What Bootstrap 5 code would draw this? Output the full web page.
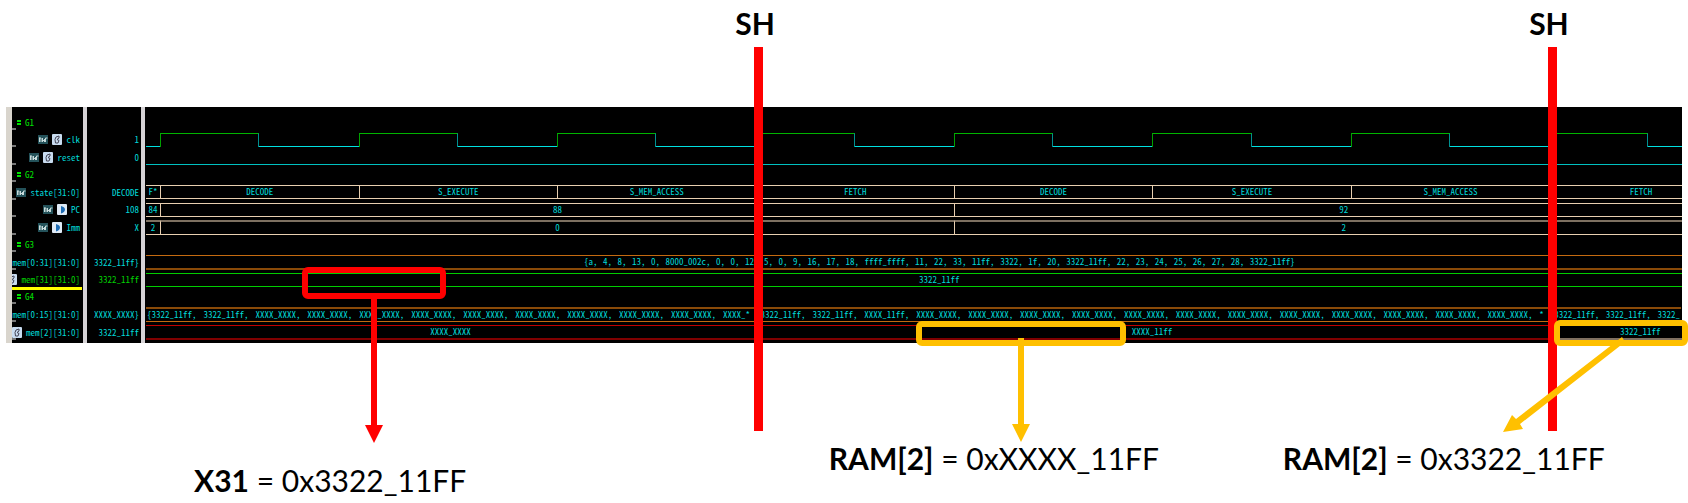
<!DOCTYPE html>
<html lang="en">
<head>
<meta charset="utf-8">
<meta name="viewport" content="width=device-width, initial-scale=1">
<title>SH instruction waveform</title>
<link href="https://cdn.jsdelivr.net/npm/bootstrap@5.3.0/dist/css/bootstrap.min.css" rel="stylesheet">
<style>
  body { background: #fff; color: #000; font-family: Lato, "Liberation Sans", sans-serif; overflow-x: hidden; }
  .figure-area { padding-top: 107px; }
  .viewer { margin: 0 6px; background: #000; color: #00d8d8; font: 9px/13px "Noto Sans Mono CJK JP", "DejaVu Sans Mono", monospace; white-space: nowrap; }
  .rows { display: grid; padding-top: 8px; grid-template-columns: minmax(0, 1fr);
    grid-template-rows: 18px 17px 18px 17px 18px 17px 18px 17px 18px 17px 17px 18px 18px; }
  .names { width: 77px; border-left: 6px solid #d9d5cd; border-right: 1px solid #000; }
  .values { width: 58px; border-left: 4px solid #d6d3d6; }
  .waves { min-width: 0; border-left: 4px solid #d6d3d6; padding-left: 1px; }
  .cell { display: flex; align-items: center; justify-content: flex-end; gap: 4px; overflow: hidden; padding: 0 2px 4px 0; }
  .names .cell { background: linear-gradient(#777, #777) no-repeat left bottom 3px / 4px 2px; }
  .cell svg { width: 10px; height: 11px; flex: none; }
  .cell span { flex: none; }
  .names .group-cell { justify-content: flex-start; padding-left: 4px; color: #00e000; }
  .cell .group-mark { width: 5px; height: 7px; }
  .names .picked { color: #00d000; border-bottom: 3px solid #ff0; padding-bottom: 2px; }
  .picked-value { color: #00d000; }
  .trace { display: flex; overflow: hidden; }
  .seg { flex: none; height: 14px; line-height: 12px; text-align: center; overflow: hidden; border: 1px solid #e8cfb0; border-width: 1px 0; }
  .seg + .seg { border-left-width: 1px; }
  .imm .seg { border-top: 2px solid #7d7060; height: 15px; line-height: 11px; }
  .array .seg { border-color: #c46a10; border-left: 0; }
  .array .seg { border-bottom: 2px solid #8a4a08; height: 15px; }
  .array.late .seg { border-top: 2px solid #8a4a08; border-bottom: 1px solid #c46a10; }
  .good .seg { border-color: #00cc00; }
  .bad .seg { border-color: #c00000; border-bottom: 2px solid #800000; border-left: 0; height: 15px; }
  .bad .known { border-color: #2c2822; border-bottom-color: #807060; }
  .lead-in { width: .92%; }
  .cycle { width: 12.92%; }
  .half { width: 6.46%; }
  .last-cycle { width: 11.9%; }
  .cycles-3 { width: 39.65%; }
  .cycles-4 { width: 51.68%; }
  .last-cycles { width: 50.7%; }
  .cycles-all { width: 103.3%; }
  .tail { width: 8.6%; }
  .fill-words { text-align: justify; text-align-last: justify; padding: 0 5px 0 1px; }
  .tail.fill-words { padding-right: 1px; }
  .whole-list { width: 44.8%; margin: 0 auto; text-align-last: justify; }
  .clk .lo, .clk .hi { flex: none; height: 14px; border-bottom: 1px solid #00e0e0; }
  .clk .hi { border-bottom: 0; border-top: 1px solid #00b400; border-left: 1px solid #00a000; border-right: 1px solid #009090; }
  .flat { height: 15px; width: 100%; border-bottom: 1px solid #00c0c0; }
  .marker { position: absolute; top: 6px; height: 425px; width: 48px; transform: translateX(-50%); display: flex; flex-direction: column; align-items: center; }
  .marker strong { font-size: 30px; line-height: 34px; padding-right: 7px; height: 41px; }
  .marker i { width: 9px; flex: 1; background: #f00; }
  .callout { position: absolute; border: 6px solid #ffc000; border-radius: 6px; }
  .callout svg { position: absolute; left: 50%; margin-left: -9px; }
  .red-box { border-color: #f00; left: 17.9%; width: 8.5%; top: 267px; height: 32px; }
  .mid-box { left: 54.25%; width: 12.45%; top: 321px; height: 25px; }
  .end-box { left: 92.05%; right: 0; top: 320px; height: 26px; }
  .slant { position: absolute; left: 89%; top: 335px; }
  .notes { display: grid; grid-template-columns: 11.5% 37.6% 26.9% 1fr; padding-top: 97px; font-size: 30px; line-height: 36px; white-space: nowrap; }
  .notes .low { padding-top: 22px; height: 62px; }
</style>
</head>
<body>
<svg class="d-none" aria-hidden="true">
  <symbol id="i-ref" viewBox="0 0 10 11"><path fill="#24525a" d="M0 1h10v9H0z"/><path fill="none" stroke="#d8e8e8" stroke-width=".9" d="M1.500 8V3.500M3 4v4M1.500 4H3M4.500 4v4M4.500 6.500h2M6.500 5v3M7.500 8V4h2"/></symbol>
  <symbol id="i-reg" viewBox="0 0 10 11"><rect width="10" height="11" rx="1" fill="#c9dcf0"/><path fill="none" stroke="#445" d="M3 5.500 4 3l3-1v2L5 5.500l2 1-1 2.500H3.500z"/></symbol>
  <symbol id="i-port" viewBox="0 0 10 11"><rect width="10" height="11" rx="1" fill="#dfeaf6"/><path fill="#1f6db5" d="M4 2c3 1 4 2 4 3.500S7 8.500 4 9.500z"/></symbol>
  <symbol id="i-group" viewBox="0 0 5 7"><path fill="#00e000" d="M1 1h4v2H1zM1 4h4v2H1z"/></symbol>
</svg>

<main class="figure-area position-relative">
  <section class="viewer d-flex" aria-label="Waveform viewer">
    <div class="rows names flex-shrink-0">
      <div class="cell group-cell"><svg class="group-mark"><use href="#i-group"/></svg><span>G1</span></div>
      <div class="cell"><svg><use href="#i-ref"/></svg><svg><use href="#i-reg"/></svg><span>clk</span></div>
      <div class="cell"><svg><use href="#i-ref"/></svg><svg><use href="#i-reg"/></svg><span>reset</span></div>
      <div class="cell group-cell"><svg class="group-mark"><use href="#i-group"/></svg><span>G2</span></div>
      <div class="cell"><svg><use href="#i-ref"/></svg><span>state[31:0]</span></div>
      <div class="cell"><svg><use href="#i-ref"/></svg><svg><use href="#i-port"/></svg><span>PC</span></div>
      <div class="cell"><svg><use href="#i-ref"/></svg><svg><use href="#i-port"/></svg><span>Imm</span></div>
      <div class="cell group-cell"><svg class="group-mark"><use href="#i-group"/></svg><span>G3</span></div>
      <div class="cell"><span>mem[0:31][31:0]</span></div>
      <div class="cell picked"><svg><use href="#i-reg"/></svg><span>mem[31][31:0]</span></div>
      <div class="cell group-cell"><svg class="group-mark"><use href="#i-group"/></svg><span>G4</span></div>
      <div class="cell"><span>mem[0:15][31:0]</span></div>
      <div class="cell"><svg><use href="#i-reg"/></svg><span>mem[2][31:0]</span></div>
    </div>

    <div class="rows values flex-shrink-0">
      <div class="cell"></div>
      <div class="cell"><span>1</span></div>
      <div class="cell"><span>0</span></div>
      <div class="cell"></div>
      <div class="cell"><span>DECODE</span></div>
      <div class="cell"><span>108</span></div>
      <div class="cell"><span>X</span></div>
      <div class="cell"></div>
      <div class="cell"><span>3322_11ff}</span></div>
      <div class="cell picked-value"><span>3322_11ff</span></div>
      <div class="cell"></div>
      <div class="cell"><span>XXXX_XXXX}</span></div>
      <div class="cell"><span>3322_11ff</span></div>
    </div>

    <div class="rows waves flex-grow-1">
      <div></div>
      <div class="trace clk">
        <div class="lo lead-in"></div>
        <div class="hi half"></div><div class="lo half"></div>
        <div class="hi half"></div><div class="lo half"></div>
        <div class="hi half"></div><div class="lo half"></div>
        <div class="hi half"></div><div class="lo half"></div>
        <div class="hi half"></div><div class="lo half"></div>
        <div class="hi half"></div><div class="lo half"></div>
        <div class="hi half"></div><div class="lo half"></div>
        <div class="hi half"></div><div class="lo half"></div>
      </div>
      <div class="trace"><div class="flat"></div></div>
      <div></div>
      <div class="trace">
        <div class="seg lead-in">F*</div><div class="seg cycle">DECODE</div><div class="seg cycle">S_EXECUTE</div><div class="seg cycle">S_MEM_ACCESS</div><div class="seg cycle">FETCH</div><div class="seg cycle">DECODE</div><div class="seg cycle">S_EXECUTE</div><div class="seg cycle">S_MEM_ACCESS</div><div class="seg last-cycle">FETCH</div>
      </div>
      <div class="trace"><div class="seg lead-in">84</div><div class="seg cycles-4">88</div><div class="seg last-cycles">92</div></div>
      <div class="trace imm"><div class="seg lead-in">2</div><div class="seg cycles-4">0</div><div class="seg last-cycles">2</div></div>
      <div></div>
      <div class="trace array"><div class="seg cycles-all"><div class="whole-list">{a, 4, 8, 13, 0, 8000_002c, 0, 0, 12, 5, 0, 9, 16, 17, 18, ffff_ffff, 11, 22, 33, 11ff, 3322, 1f, 20, 3322_11ff, 22, 23, 24, 25, 26, 27, 28, 3322_11ff}</div></div></div>
      <div class="trace good"><div class="seg cycles-all">3322_11ff</div></div>
      <div></div>
      <div class="trace array late">
        <div class="seg cycles-3 fill-words">{3322_11ff, 3322_11ff, XXXX_XXXX, XXXX_XXXX, XXXX_XXXX, XXXX_XXXX, XXXX_XXXX, XXXX_XXXX, XXXX_XXXX, XXXX_XXXX, XXXX_XXXX, XXXX_*</div>
        <div class="seg cycles-4 fill-words">{3322_11ff, 3322_11ff, XXXX_11ff, XXXX_XXXX, XXXX_XXXX, XXXX_XXXX, XXXX_XXXX, XXXX_XXXX, XXXX_XXXX, XXXX_XXXX, XXXX_XXXX, XXXX_XXXX, XXXX_XXXX, XXXX_XXXX, XXXX_XXXX, *</div>
        <div class="seg tail fill-words">{3322_11ff, 3322_11ff, 3322_</div>
      </div>
      <div class="trace bad"><div class="seg cycles-3">XXXX_XXXX</div><div class="seg cycles-4">XXXX_11ff</div><div class="seg last-cycle known">3322_11ff</div></div>
    </div>
  </section>

  <div class="marker" style="left:44.94%"><strong>SH</strong><i></i></div>
  <div class="marker" style="left:91.97%"><strong>SH</strong><i></i></div>

  <div class="callout red-box"><svg width="18" height="150" style="top:20px"><path fill="#f00" d="M6 0h6v132h6L9 150 0 132h6z"/></svg></div>
  <div class="callout mid-box"><svg width="18" height="104" style="top:11px"><path fill="#ffc000" d="M6 0h6v86h6L9 104 0 86h6z"/></svg></div>
  <div class="callout end-box"></div>
  <svg class="slant" width="126" height="100"><path fill="#ffc000" d="M120 2 123 7 18 89 21 94 1 97 10 80 14 84z"/></svg>

  <div class="notes">
    <span></span>
    <div class="low"><b>X31</b> = 0x3322_11FF</div>
    <div><b>RAM[2]</b> = 0xXXXX_11FF</div>
    <div><b>RAM[2]</b> = 0x3322_11FF</div>
  </div>
</main>
<script src="https://cdn.jsdelivr.net/npm/bootstrap@5.3.0/dist/js/bootstrap.bundle.min.js"></script>
</body>
</html>
